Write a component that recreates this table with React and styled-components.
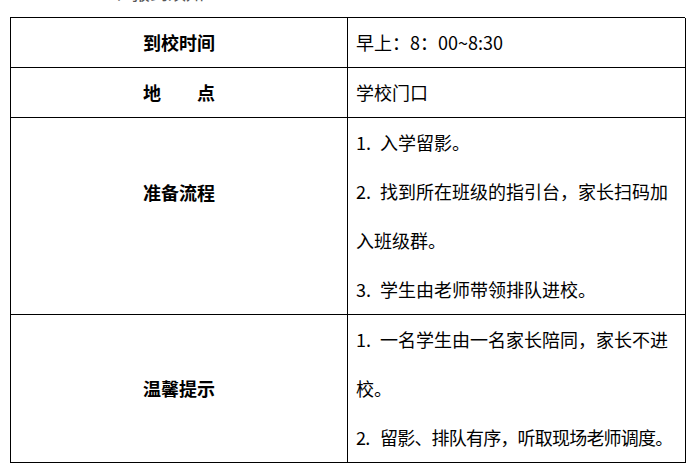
import { Fragment } from "react";
import styled, { createGlobalStyle } from "styled-components";

const GlobalStyle = createGlobalStyle`
    html, body {
        margin: 0;
        padding: 0;
        background: #fff;
    }
    body {
        font-family: "Noto Sans CJK SC", "Noto Sans", sans-serif;
        color: #000;
    }
`;

const Page = styled.div`
    width: 700px;
    height: 474px;
    overflow: hidden;
    padding-left: 10px;
    box-sizing: border-box;
`;

// heading above the table, cut off by the top edge of the shot
const Heading = styled.div`
    height: 17px;
    overflow: hidden;
    padding-left: 86px;
    font-size: 18px;
    line-height: 20px;
    color: #555;

    span {
        display: block;
        margin-top: -18px;
    }
`;

const Table = styled.div`
    display: grid;
    grid-template-columns: 337px 338px;
    width: 675px;
    border-top: 1.5px solid #000;
    border-left: 1.5px solid #000;
    box-sizing: border-box;
`;

const Cell = styled.div`
    border-right: 1.5px solid #000;
    border-bottom: 1.5px solid #000;
    font-size: 18px;
    line-height: 49px;
`;

const Label = styled(Cell)`
    display: flex;
    align-items: center;
    justify-content: center;
    font-weight: 700;
    white-space: pre;
    padding-bottom: ${({ $lift }) => ($lift ? `${$lift}px` : "0")};
`;

const Content = styled(Cell)`
    padding-left: 8px;
`;

const Line = styled.div`
    white-space: nowrap;
    letter-spacing: ${({ $tight }) => ($tight ? "-0.8px" : "0")};
`;

const Num = styled.span`
    display: inline-block;
    width: 24px;
`;

const rows = [
    { label: "到校时间", lines: [{ text: "早上：8：00~8:30" }] },
    { label: "地　　点", lines: [{ text: "学校门口" }] },
    {
        label: "准备流程",
        lift: 48,
        lines: [
            { num: "1.", text: "入学留影。" },
            { num: "2.", text: "找到所在班级的指引台，家长扫码加" },
            { text: "入班级群。" },
            { num: "3.", text: "学生由老师带领排队进校。" },
        ],
    },
    {
        label: "温馨提示",
        lines: [
            { num: "1.", text: "一名学生由一名家长陪同，家长不进" },
            { text: "校。" },
            { num: "2.", text: "留影、排队有序，听取现场老师调度。", tight: true },
        ],
    },
];

export default function App() {
    return (
        <>
            <GlobalStyle />
            <Page>
                <Heading>
                    <span>二、报到须知</span>
                </Heading>
                <Table>
                    {rows.map((row) => (
                        <Fragment key={row.label}>
                            <Label $lift={row.lift}>{row.label}</Label>
                            <Content>
                                {row.lines.map((line, i) => (
                                    <Line key={i} $tight={line.tight}>
                                        {line.num && <Num>{line.num}</Num>}
                                        {line.text}
                                    </Line>
                                ))}
                            </Content>
                        </Fragment>
                    ))}
                </Table>
            </Page>
        </>
    );
}
